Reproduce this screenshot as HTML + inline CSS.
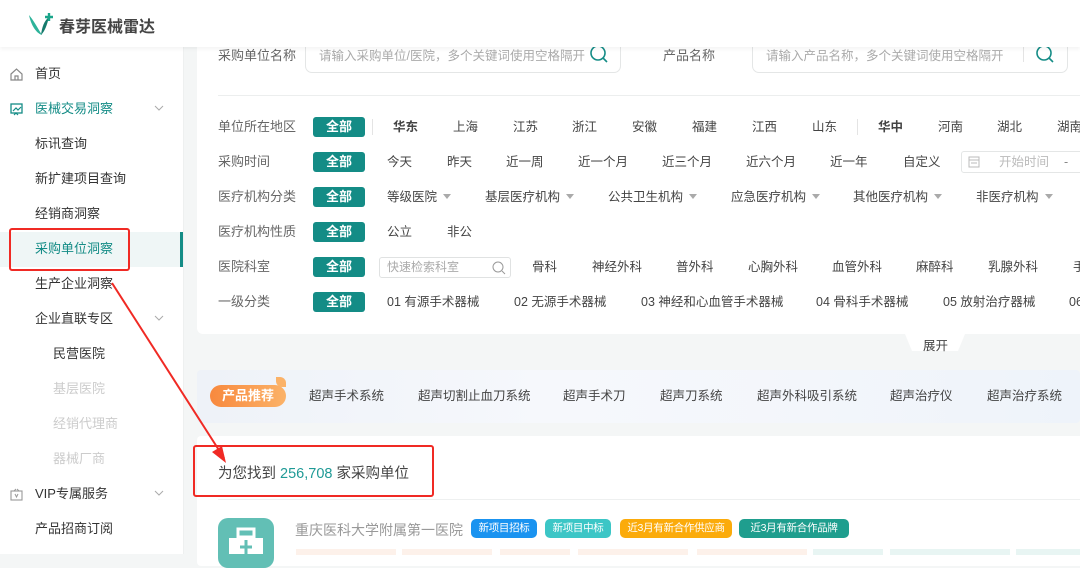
<!DOCTYPE html>
<html><head><meta charset="utf-8">
<style>
*{margin:0;padding:0;box-sizing:border-box}
body{width:1080px;height:554px;overflow:hidden;background:#f4f6f6;font-family:"Liberation Sans","Noto Sans CJK SC",sans-serif;position:relative;color:#333}
.abs{position:absolute;white-space:nowrap}
#hdr{position:absolute;left:0;top:0;width:1080px;height:47px;background:#fff;box-shadow:0 2px 4px rgba(0,0,0,.05);z-index:5}
#side{position:absolute;left:0;top:47px;width:183px;height:507px;background:#fff}
.si{position:absolute;font-size:13px;color:#333;line-height:16px}
.card{position:absolute;background:#fff;border-radius:6px}
.lbl{position:absolute;left:218px;font-size:13px;color:#666;line-height:16px}
.all{position:absolute;left:313px;width:52px;height:20px;background:#148c86;color:#fff;font-size:13px;font-weight:bold;text-align:center;line-height:20px;border-radius:3px}
.opt{position:absolute;font-size:12.5px;color:#444;line-height:16px;white-space:nowrap}
.tri{display:inline-block;width:0;height:0;border-left:4px solid transparent;border-right:4px solid transparent;border-top:5px solid #aaa;margin-left:6px;vertical-align:2px}
.tag{position:absolute;top:519px;height:19px;line-height:19px;font-size:10.5px;color:#fff;text-align:center;border-radius:5px;letter-spacing:-0.3px}
</style></head><body>
<div id="hdr">
<svg class="abs" style="left:27px;top:9px" width="28" height="28" viewBox="0 0 28 28">
<path d="M3 8 C6 14 8 20 14 26 C10 20 8 14 3 8Z" fill="#1aa58a"/>
<path d="M2 6 C4 16 9 24 15 26 C10 18 7 12 2 6Z" fill="#2db39a"/>
<path d="M14 26 C15 18 17 12 22 8 C20 16 18 22 14 26Z" fill="#157a6c"/>
<path d="M22 4v8M18 8h8" stroke="#1aa58a" stroke-width="2.4"/>
</svg>
<div class="abs" style="left:59px;top:13px;font-size:16px;font-weight:bold;color:#444">春芽医械雷达</div>
</div>
<div id="side">
<div style="position:absolute;left:0;top:185px;width:183px;height:35px;background:#eff6f6"></div>
<div style="position:absolute;left:180px;top:185px;width:3px;height:35px;background:#148c86"></div>
</div>
<div style="position:absolute;left:183px;top:47px;width:1px;height:507px;background:#eef0f0"></div>
<svg class="abs" style="left:9px;top:67px" width="15" height="15" viewBox="0 0 15 15"><path d="M2 7L7.5 2 13 7V13H2Z M6 13V9h3v4" fill="none" stroke="#888" stroke-width="1.2"/></svg>
<div class="si" style="left:35px;top:66px">首页</div>
<svg class="abs" style="left:9px;top:102px" width="15" height="15" viewBox="0 0 15 15"><rect x="2" y="2" width="11" height="9" fill="none" stroke="#148c86" stroke-width="1.3"/><path d="M4 9l3-3 2 2 3-3M5 13l2-2 2 2" fill="none" stroke="#148c86" stroke-width="1.2"/></svg>
<div class="si" style="left:35px;top:101px;color:#148c86">医械交易洞察</div>
<svg class="abs" style="left:154px;top:105px" width="10" height="7"><path d="M1 1l4 4 4-4" fill="none" stroke="#aaa"/></svg>
<div class="si" style="left:35px;top:136px">标讯查询</div>
<div class="si" style="left:35px;top:171px">新扩建项目查询</div>
<div class="si" style="left:35px;top:206px">经销商洞察</div>
<div class="si" style="left:35px;top:241px;color:#148c86">采购单位洞察</div>
<div class="si" style="left:35px;top:276px">生产企业洞察</div>
<div class="si" style="left:35px;top:311px">企业直联专区</div>
<svg class="abs" style="left:154px;top:315px" width="10" height="7"><path d="M1 1l4 4 4-4" fill="none" stroke="#aaa"/></svg>
<div class="si" style="left:53px;top:346px">民营医院</div>
<div class="si" style="left:53px;top:381px;color:#ccc">基层医院</div>
<div class="si" style="left:53px;top:416px;color:#ccc">经销代理商</div>
<div class="si" style="left:53px;top:451px;color:#ccc">器械厂商</div>
<svg class="abs" style="left:9px;top:487px" width="15" height="15" viewBox="0 0 15 15"><rect x="2" y="4" width="11" height="9" fill="none" stroke="#999" stroke-width="1.1"/><path d="M5 4l2-2M10 4L8 2M6 7l1.5 3L9 7" fill="none" stroke="#999" stroke-width="1"/></svg>
<div class="si" style="left:35px;top:486px">VIP专属服务</div>
<svg class="abs" style="left:154px;top:490px" width="10" height="7"><path d="M1 1l4 4 4-4" fill="none" stroke="#aaa"/></svg>
<div class="si" style="left:35px;top:521px">产品招商订阅</div>

<div class="card" style="left:197px;top:20px;width:895px;height:314px"></div>
<div class="abs" style="left:218px;top:45px;font-size:13px;color:#666">采购单位名称</div>
<div class="abs" style="left:305px;top:30px;width:316px;height:43px;border:1px solid #e4e6e6;border-radius:7px"></div>
<div class="abs" style="left:319px;top:45px;font-size:12.5px;color:#aaa">请输入采购单位/医院，多个关键词使用空格隔开</div>
<svg class="abs" style="left:589px;top:44px" width="20" height="20"><circle cx="9" cy="9" r="7" fill="none" stroke="#148c86" stroke-width="1.6"/><path d="M14 14l4 4" stroke="#148c86" stroke-width="1.6"/></svg>
<div class="abs" style="left:663px;top:45px;font-size:13px;color:#666">产品名称</div>
<div class="abs" style="left:752px;top:30px;width:316px;height:43px;border:1px solid #e4e6e6;border-radius:7px"></div>
<div class="abs" style="left:766px;top:45px;font-size:12.5px;color:#aaa">请输入产品名称，多个关键词使用空格隔开</div>
<div class="abs" style="left:1023px;top:44px;width:1px;height:18px;background:#e4e4e4"></div>
<svg class="abs" style="left:1035px;top:44px" width="20" height="20"><circle cx="9" cy="9" r="7" fill="none" stroke="#148c86" stroke-width="1.6"/><path d="M14 14l4 4" stroke="#148c86" stroke-width="1.6"/></svg>
<div class="abs" style="left:218px;top:95px;width:862px;height:1px;background:#eceeee"></div>

<div class="lbl" style="top:119px">单位所在地区</div><div class="all" style="top:117px">全部</div>
<div class="abs" style="left:372px;top:119px;width:1px;height:16px;background:#e4e4e4"></div>
<div class="opt" style="left:393px;top:119px;font-weight:bold">华东</div>
<div class="opt" style="left:453px;top:119px">上海</div><div class="opt" style="left:513px;top:119px">江苏</div><div class="opt" style="left:572px;top:119px">浙江</div><div class="opt" style="left:632px;top:119px">安徽</div><div class="opt" style="left:692px;top:119px">福建</div><div class="opt" style="left:752px;top:119px">江西</div><div class="opt" style="left:812px;top:119px">山东</div>
<div class="abs" style="left:857px;top:119px;width:1px;height:16px;background:#e4e4e4"></div>
<div class="opt" style="left:878px;top:119px;font-weight:bold">华中</div><div class="opt" style="left:938px;top:119px">河南</div><div class="opt" style="left:997px;top:119px">湖北</div><div class="opt" style="left:1057px;top:119px">湖南</div>

<div class="lbl" style="top:154px">采购时间</div><div class="all" style="top:152px">全部</div>
<div class="opt" style="left:387px;top:154px">今天</div><div class="opt" style="left:447px;top:154px">昨天</div><div class="opt" style="left:506px;top:154px">近一周</div><div class="opt" style="left:578px;top:154px">近一个月</div><div class="opt" style="left:662px;top:154px">近三个月</div><div class="opt" style="left:746px;top:154px">近六个月</div><div class="opt" style="left:830px;top:154px">近一年</div><div class="opt" style="left:903px;top:154px">自定义</div>
<div class="abs" style="left:961px;top:151px;width:130px;height:22px;border:1px solid #e4e6e6;border-radius:3px"></div>
<svg class="abs" style="left:968px;top:155px" width="12" height="13"><rect x="1" y="2" width="10" height="10" fill="none" stroke="#bbb"/><path d="M1 5h10M3 8h6" stroke="#bbb"/></svg>
<div class="opt" style="left:999px;top:154px;color:#bbb">开始时间</div><div class="opt" style="left:1064px;top:154px;color:#888">-</div>

<div class="lbl" style="top:189px">医疗机构分类</div><div class="all" style="top:187px">全部</div>
<div class="opt" style="left:387px;top:189px">等级医院<span class="tri"></span></div><div class="opt" style="left:485px;top:189px">基层医疗机构<span class="tri"></span></div><div class="opt" style="left:608px;top:189px">公共卫生机构<span class="tri"></span></div><div class="opt" style="left:731px;top:189px">应急医疗机构<span class="tri"></span></div><div class="opt" style="left:853px;top:189px">其他医疗机构<span class="tri"></span></div><div class="opt" style="left:976px;top:189px">非医疗机构<span class="tri"></span></div>

<div class="lbl" style="top:224px">医疗机构性质</div><div class="all" style="top:222px">全部</div>
<div class="opt" style="left:387px;top:224px">公立</div><div class="opt" style="left:447px;top:224px">非公</div>

<div class="lbl" style="top:259px">医院科室</div><div class="all" style="top:257px">全部</div>
<div class="abs" style="left:379px;top:257px;width:132px;height:21px;border:1px solid #e0e2e2;border-radius:3px"></div>
<div class="opt" style="left:387px;top:259px;color:#aaa;font-size:12px">快速检索科室</div>
<svg class="abs" style="left:492px;top:261px" width="14" height="14"><circle cx="6" cy="6" r="5" fill="none" stroke="#999"/><path d="M10 10l3 3" stroke="#999"/></svg>
<div class="opt" style="left:532px;top:259px">骨科</div><div class="opt" style="left:592px;top:259px">神经外科</div><div class="opt" style="left:676px;top:259px">普外科</div><div class="opt" style="left:748px;top:259px">心胸外科</div><div class="opt" style="left:832px;top:259px">血管外科</div><div class="opt" style="left:916px;top:259px">麻醉科</div><div class="opt" style="left:988px;top:259px">乳腺外科</div><div class="opt" style="left:1073px;top:259px">手</div>

<div class="lbl" style="top:294px">一级分类</div><div class="all" style="top:292px">全部</div>
<div class="opt" style="left:387px;top:294px">01 有源手术器械</div><div class="opt" style="left:514px;top:294px">02 无源手术器械</div><div class="opt" style="left:641px;top:294px">03 神经和心血管手术器械</div><div class="opt" style="left:816px;top:294px">04 骨科手术器械</div><div class="opt" style="left:943px;top:294px">05 放射治疗器械</div><div class="opt" style="left:1069px;top:294px">06</div>

<div class="abs" style="left:905px;top:334px;width:60px;height:0;border-top:17px solid #fff;border-left:7px solid transparent;border-right:7px solid transparent"></div>
<div class="abs" style="left:923px;top:335px;font-size:12.5px;color:#444">展开</div>

<div class="abs" style="left:197px;top:370px;width:883px;height:53px;background:linear-gradient(90deg,#eef2f8,#f6f8fc 40%,#f3f6fb 70%,#eef3fa);border-radius:4px"></div>
<div class="abs" style="left:210px;top:385px;width:76px;height:22px;border-radius:11px;background:linear-gradient(90deg,#f8893e,#fbb268);color:#fff;font-size:13px;font-weight:bold;text-align:center;line-height:22px">产品推荐</div>
<div class="abs" style="left:276px;top:377px;width:10px;height:10px;background:#fbb268;border-radius:0 6px 0 6px"></div>
<div class="opt" style="left:309px;top:388px">超声手术系统</div>
<div class="opt" style="left:418px;top:388px">超声切割止血刀系统</div>
<div class="opt" style="left:563px;top:388px">超声手术刀</div>
<div class="opt" style="left:660px;top:388px">超声刀系统</div>
<div class="opt" style="left:757px;top:388px">超声外科吸引系统</div>
<div class="opt" style="left:890px;top:388px">超声治疗仪</div>
<div class="opt" style="left:987px;top:388px">超声治疗系统</div>

<div class="card" style="left:197px;top:436px;width:895px;height:130px;border-radius:4px"></div>
<div class="abs" style="left:218px;top:462px;font-size:14.5px;color:#444">为您找到 <span style="color:#1f9a96">256,708</span> 家采购单位</div>
<div class="abs" style="left:218px;top:499px;width:862px;height:1px;background:#eef0f0"></div>
<div class="abs" style="left:218px;top:518px;width:56px;height:50px;background:#62bfb5;border-radius:10px"></div>
<svg class="abs" style="left:226px;top:527px" width="40" height="27"><rect x="12" y="2" width="16" height="8" fill="none" stroke="#fff" stroke-width="3"/><rect x="3" y="11" width="34" height="18" fill="#fff"/><path d="M20 13v14M14 20h12" stroke="#62bfb5" stroke-width="3"/></svg>
<div class="abs" style="left:295px;top:520px;font-size:14px;color:#999">重庆医科大学附属第一医院</div>
<div class="tag" style="left:471px;width:66px;background:#1a93f0">新项目招标</div>
<div class="tag" style="left:545px;width:66px;background:#3cc6c6">新项目中标</div>
<div class="tag" style="left:620px;width:112px;background:#fbab0b">近3月有新合作供应商</div>
<div class="tag" style="left:739px;width:110px;background:#1f9e8e">近3月有新合作品牌</div>
<div class="abs" style="left:296px;top:549px;width:100px;height:6px;background:#fdf1ea"></div>
<div class="abs" style="left:402px;top:549px;width:90px;height:6px;background:#fdf1ea"></div>
<div class="abs" style="left:500px;top:549px;width:70px;height:6px;background:#fdf1ea"></div>
<div class="abs" style="left:578px;top:549px;width:110px;height:6px;background:#fdf1ea"></div>
<div class="abs" style="left:697px;top:549px;width:110px;height:6px;background:#fdf1ea"></div>
<div class="abs" style="left:813px;top:549px;width:70px;height:6px;background:#e8f5f3"></div>
<div class="abs" style="left:890px;top:549px;width:120px;height:6px;background:#e8f5f3"></div>
<div class="abs" style="left:1016px;top:549px;width:64px;height:6px;background:#e8f5f3"></div>

<div class="abs" style="left:9px;top:228px;width:121px;height:43px;border:2px solid #f02a24;border-radius:3px;z-index:6"></div>
<div class="abs" style="left:193px;top:445px;width:241px;height:52px;border:2px solid #f02a24;border-radius:3px"></div>
<svg class="abs" style="left:0;top:0;z-index:7" width="400" height="554"><path d="M112 283 L224 458" stroke="#f02a24" stroke-width="2"/><path d="M226 463 L212 452 L222 446Z" fill="#f02a24"/></svg>
</body></html>
